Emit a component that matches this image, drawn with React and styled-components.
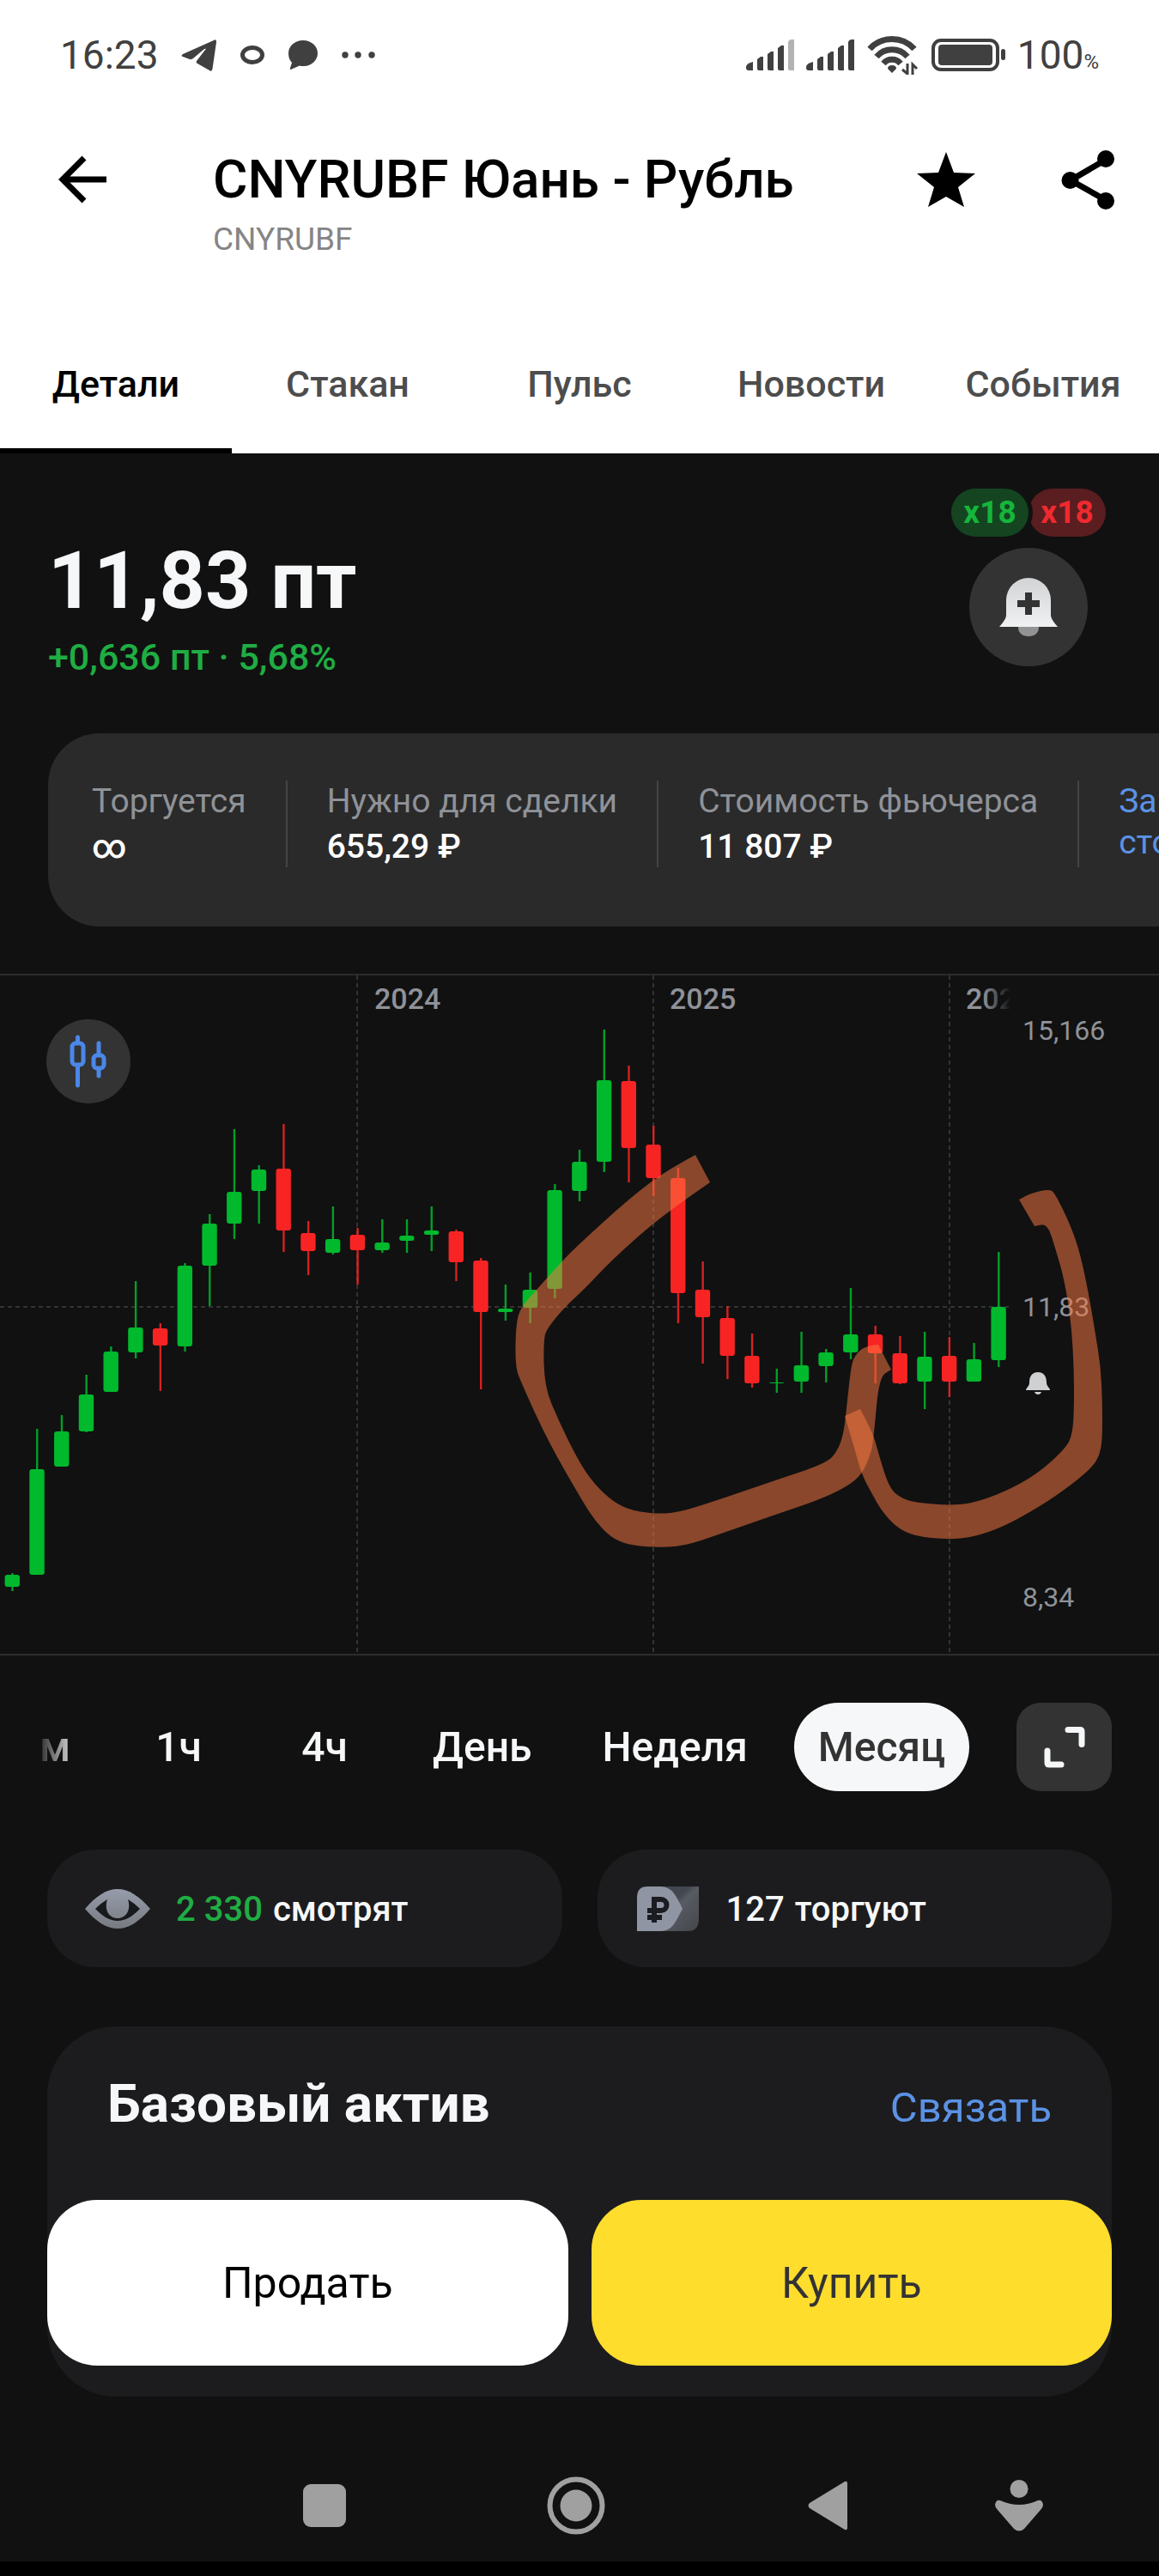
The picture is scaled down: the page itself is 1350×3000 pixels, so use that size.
import React from "react";
import styled, { createGlobalStyle } from "styled-components";

const colors = {
    white: "#ffffff",
    snow: "#f6f7f8",
    page: "#111111",
    card: "#1c1c1e",
    strip: "#2a2a2a",
    control: "#333333",
    grey: "#8f9298",
    status: "#404040",
    green: "#00b92d",
    textGreen: "#1fad43",
    red: "#f82424",
    blue: "#5b92e5",
    yellow: "#ffdd2d",
    nav: "#a0a0a0",
};

const GlobalStyle = createGlobalStyle`
    *, *::before, *::after {
        box-sizing: border-box;
    }

    body {
        margin: 0;
        background: ${colors.page};
        color: ${colors.snow};
        font-family: Roboto, "Liberation Sans", sans-serif;
    }

    h1, h2, p, dl, dt, dd, figure {
        margin: 0;
    }

    button {
        padding: 0;
        border: 0;
        background: none;
        color: inherit;
        font: inherit;
        cursor: pointer;
    }

    a {
        color: inherit;
        text-decoration: none;
    }

    svg {
        display: block;
        flex: none;
    }
`;

const Screen = styled.div`
    display: flex;
    flex-direction: column;
    min-height: 100vh;
    overflow: hidden;
`;

const Top = styled.header`
    background: ${colors.white};
    color: #000;
`;

const StatusBar = styled.div`
    display: flex;
    justify-content: space-between;
    align-items: center;
    height: 128px;
    padding: 0 70px;
    color: ${colors.status};
    font-size: 46px;
    line-height: 56px;
`;

const StatusGroup = styled.div`
    display: flex;
    align-items: center;
    gap: ${(props) => props.$gap}px;
`;

const Percent = styled.small`
    font-size: 24px;
    line-height: 24px;
`;

const TitleBar = styled.div`
    display: flex;
    align-items: flex-start;
    padding: 45px 51px 65px 68px;
`;

const IconButton = styled.button`
    display: flex;
    align-items: center;
    justify-content: center;
    height: 72px;
`;

const Titles = styled.div`
    flex: 1;
    margin-left: 124px;
`;

const Title = styled.h1`
    font-size: 62px;
    font-weight: 500;
    line-height: 72px;
`;

const Ticker = styled.p`
    margin-top: 12px;
    color: #858585;
    font-size: 37px;
    line-height: 44px;
`;

const TitleActions = styled.div`
    display: flex;
    gap: 100px;
`;

const Tabs = styled.nav`
    display: grid;
    grid-template-columns: repeat(5, 1fr);
`;

const Tab = styled.a`
    padding: 56px 0 50px;
    border-bottom: 6px solid ${(props) => (props.$active ? "#000" : "transparent")};
    color: ${(props) => (props.$active ? "#000" : "#4d4d4d")};
    font-size: 43px;
    font-weight: 500;
    line-height: 50px;
    text-align: center;
`;

const Quote = styled.section`
    display: flex;
    justify-content: space-between;
    padding: 41px 62px 0 56px;
`;

const QuoteText = styled.div`
    padding-top: 60px;
`;

const Price = styled.p`
    font-size: 93px;
    font-weight: 700;
    line-height: 96px;
`;

const Change = styled.p`
    margin-top: 16px;
    color: ${colors.textGreen};
    font-size: 43px;
    font-weight: 500;
    line-height: 48px;
`;

const QuoteSide = styled.div`
    display: flex;
    flex-direction: column;
    align-items: center;
    gap: 13px;
`;

const Badges = styled.div`
    display: flex;
`;

const Badge = styled.span`
    position: relative;
    z-index: ${(props) => (props.$up ? 1 : 0)};
    width: 90px;
    border-radius: 28px;
    background: ${(props) => (props.$up ? "#144520" : "#5a1d20")};
    box-shadow: ${(props) => (props.$up ? `0 0 0 5px ${colors.page}` : "none")};
    color: ${(props) => (props.$up ? "#16b53c" : "#ef2a2f")};
    font-size: 37px;
    font-weight: 700;
    line-height: 56px;
    text-align: center;
`;

const BellButton = styled.button`
    display: flex;
    align-items: center;
    justify-content: center;
    width: 138px;
    height: 138px;
    border-radius: 50%;
    background: ${colors.control};
`;

const Facts = styled.dl`
    display: flex;
    margin: 65px 0 55px 56px;
    padding: 55px 0 69px 51px;
    border-radius: 60px 0 0 60px;
    background: ${colors.strip};
    font-size: 39px;
    line-height: 48px;
    white-space: nowrap;
    overflow: hidden;
`;

const Fact = styled.div`
    flex: none;
    padding-right: 46px;
    margin-right: 46px;
    border-right: 2px solid #444;
`;

const FactLabel = styled.dt`
    color: ${colors.grey};
`;

const FactValue = styled.dd`
    margin-top: 5px;
    color: ${colors.white};
    font-weight: 500;
`;

const FactLink = styled.a`
    flex: none;
    color: ${colors.blue};
`;

const ChartPanel = styled.figure`
    position: relative;
    border-top: 2px solid #2c2c2c;
    border-bottom: 2px solid #2c2c2c;
`;

const ChartSvg = styled.svg`
    width: 100%;
    height: auto;
    font-family: Roboto, "Liberation Sans", sans-serif;
`;

const ChartType = styled.button`
    position: absolute;
    top: 51px;
    left: 54px;
    display: flex;
    align-items: center;
    justify-content: center;
    width: 98px;
    height: 98px;
    border-radius: 50%;
    background: ${colors.control};
`;

const Intervals = styled.div`
    display: flex;
    gap: 55px;
    padding: 55px 55px 0 40px;
`;

const IntervalList = styled.div`
    display: flex;
    flex: 1;
    justify-content: flex-end;
    gap: 26px;
    min-width: 0;
    overflow: hidden;
    mask-image: linear-gradient(to right, transparent, #000 50px);
`;

const Interval = styled.button`
    flex: none;
    min-width: ${(props) => (props.$cut ? 0 : 144)}px;
    height: 103px;
    padding: ${(props) => (props.$cut ? "0 28px 0 0" : "0 28px")};
    border-radius: 52px;
    background: ${(props) => (props.$active ? colors.snow : "transparent")};
    color: ${(props) => (props.$active ? "#333" : colors.snow)};
    font-size: 48px;
    font-weight: 500;
`;

const ExpandButton = styled.button`
    display: flex;
    flex: none;
    align-items: center;
    justify-content: center;
    width: 111px;
    height: 103px;
    border-radius: 28px;
    background: ${colors.control};
`;

const Stats = styled.div`
    display: grid;
    grid-template-columns: 1fr 1fr;
    gap: 41px;
    padding: 68px 55px 0;
`;

const Stat = styled.div`
    display: flex;
    align-items: center;
    gap: 30px;
    height: 137px;
    padding: 0 44px;
    border-radius: 56px;
    background: ${colors.card};
    font-size: 40px;
    font-weight: 500;
    line-height: 50px;
`;

const StatText = styled.p`
    display: flex;
    gap: 12px;
    padding-top: 2px;
    white-space: nowrap;
`;

const StatCount = styled.span`
    color: ${(props) => (props.$up ? colors.textGreen : "inherit")};
`;

const Asset = styled.section`
    margin: 69px 55px 0;
    padding-bottom: 36px;
    border-radius: 80px;
    background: ${colors.card};
`;

const AssetHead = styled.div`
    display: flex;
    align-items: baseline;
    justify-content: space-between;
    padding: 54px 70px 76px;
`;

const AssetTitle = styled.h2`
    font-size: 62px;
    font-weight: 700;
    line-height: 72px;
`;

const AssetLink = styled.a`
    color: ${colors.blue};
    font-size: 49px;
    line-height: 60px;
`;

const Deal = styled.div`
    display: grid;
    grid-template-columns: 1fr 1fr;
    gap: 27px;
`;

const DealButton = styled.button`
    height: 193px;
    border-radius: 58px;
    background: ${(props) => (props.$buy ? colors.yellow : colors.white)};
    color: ${(props) => (props.$buy ? "#333" : "#000")};
    font-size: 50px;
`;

const SystemNav = styled.nav`
    display: grid;
    grid-template-columns: 293fr 293fr 293fr 153fr;
    margin-top: auto;
    padding: 62px 86px 0 231px;
    border-bottom: 17px solid #000;
`;

const NavButton = styled.button`
    display: flex;
    align-items: center;
    justify-content: center;
    height: 130px;
`;

const tabs = ["Детали", "Стакан", "Пульс", "Новости", "События"];

const facts = [
    { label: "Торгуется", value: "∞" },
    { label: "Нужно для сделки", value: "655,29 ₽" },
    { label: "Стоимость фьючерса", value: "11 807 ₽" },
];

const intervals = ["м", "1ч", "4ч", "День", "Неделя", "Месяц"];

// direction, high, body top, body bottom, low
const candles = [
    ["up", 698, 700, 714, 719],
    ["up", 530, 577, 700, 700],
    ["up", 514, 533, 574, 574],
    ["up", 467, 490, 533, 534],
    ["up", 434, 440, 487, 487],
    ["up", 358, 412, 441, 448],
    ["down", 407, 413, 433, 486],
    ["up", 337, 340, 434, 440],
    ["up", 280, 291, 340, 387],
    ["up", 181, 254, 291, 309],
    ["up", 223, 228, 253, 291],
    ["down", 175, 227, 299, 324],
    ["down", 288, 302, 323, 351],
    ["up", 271, 309, 325, 327],
    ["down", 296, 304, 322, 362],
    ["up", 286, 313, 322, 325],
    ["up", 286, 305, 311, 325],
    ["up", 271, 299, 304, 323],
    ["down", 298, 300, 336, 358],
    ["down", 331, 334, 394, 484],
    ["up", 362, 390, 394, 404],
    ["up", 348, 368, 389, 407],
    ["up", 245, 252, 367, 378],
    ["up", 205, 219, 253, 265],
    ["up", 65, 124, 219, 231],
    ["down", 107, 125, 203, 243],
    ["down", 177, 199, 238, 259],
    ["down", 226, 238, 372, 407],
    ["down", 335, 368, 400, 454],
    ["down", 387, 401, 445, 472],
    ["down", 419, 445, 477, 482],
    ["up", 460, 476, 477, 488],
    ["up", 417, 456, 475, 488],
    ["up", 437, 441, 457, 476],
    ["up", 366, 420, 441, 449],
    ["down", 410, 420, 442, 477],
    ["down", 422, 442, 477, 478],
    ["up", 417, 446, 475, 507],
    ["down", 423, 445, 475, 493],
    ["up", 430, 449, 475, 475],
    ["up", 324, 388, 450, 458],
];

// each marker stroke is kept as its two edges
const markers = [
    [
        [
            [810, 211], [778, 228], [735, 260], [670, 319], [650, 340], [625, 368], [607, 388], [601, 407],
            [600, 457], [607, 476], [638, 544], [680, 617], [694, 638], [711, 656], [731, 665], [761, 668],
            [796, 667], [843, 651], [900, 631], [956, 612], [987, 597], [1004, 583], [1015, 558], [1018, 536],
            [1024, 470], [1038, 461],
        ],
        [
            [1023, 432], [1008, 433], [995, 445], [991, 460], [987, 497], [983, 534], [976, 555], [963, 570],
            [900, 591], [839, 612], [789, 628], [761, 629], [731, 624], [709, 611], [687, 588], [670, 560],
            [651, 521], [634, 481], [633, 425], [638, 412], [659, 387], [680, 368], [713, 333], [757, 294],
            [791, 268], [827, 243],
        ],
    ],
    [
        [
            [1187, 263], [1201, 255], [1223, 251], [1229, 256], [1247, 293], [1258, 325], [1268, 372], [1276, 420],
            [1282, 457], [1284, 499], [1284, 542], [1281, 560], [1273, 574], [1247, 596], [1212, 620], [1169, 644],
            [1134, 656], [1104, 659], [1065, 655], [1043, 644], [1026, 624], [1017, 608], [1004, 584], [995, 552],
            [984, 515],
        ],
        [
            [1002, 507], [1017, 535], [1023, 558], [1036, 600], [1052, 612], [1069, 616], [1104, 619], [1132, 617],
            [1169, 604], [1208, 583], [1242, 552], [1249, 536], [1251, 510], [1251, 462], [1248, 409], [1240, 357],
            [1229, 319], [1220, 291], [1205, 294],
        ],
    ],
];

function smoothEdge(points) {
    const last = points[points.length - 1];
    const curves = points.slice(1, -1).map(([x, y], i) => {
        const [nx, ny] = points[i + 2];
        return `Q${x} ${y} ${(x + nx) / 2} ${(y + ny) / 2}`;
    });
    return `${points[0].join(" ")}${curves.join("")}L${last.join(" ")}`;
}

const Signal = ({ weak }) => (
    <svg width="56" height="36" viewBox="0 0 56 36" fill="currentColor">
        <path d="M0 32q0-4 8-6v10H3q-3 0-3-3z" />
        <path d="M13 23l4-3h3v16h-5q-2 0-2-2z" />
        <path d="M25 17l4-3h3v22h-5q-2 0-2-2z" />
        <path d="M37 10l4-3h3v29h-5q-2 0-2-2z" />
        <path d="M49 3q1-3 4-3h3v36h-5q-2 0-2-2z" opacity={weak ? 0.4 : 1} />
    </svg>
);

const Chart = () => (
    <ChartSvg viewBox="0 0 1350 790" role="img" aria-label="CNYRUBF">
        <defs>
            <linearGradient id="yearFade" gradientUnits="userSpaceOnUse" x1="1145" y1="0" x2="1177" y2="0">
                <stop stopColor={colors.grey} />
                <stop offset="1" stopColor={colors.grey} stopOpacity="0" />
            </linearGradient>
        </defs>
        <g stroke="#333" strokeWidth="2" strokeDasharray="5 4">
            {[416, 761, 1106].map((x) => (
                <path key={x} d={`M${x} 0V788`} />
            ))}
            <path d="M0 386H1178" />
        </g>
        <g fill={colors.grey} fontSize="34" fontWeight="500">
            <text x="436" y="39">2024</text>
            <text x="780" y="39">2025</text>
            <text x="1125" y="39" fill="url(#yearFade)">2026</text>
        </g>
        <g fill={colors.grey} fontSize="32">
            <text x="1191" y="75">15,166</text>
            <text x="1191" y="397">11,83</text>
            <text x="1191" y="735">8,34</text>
        </g>
        {candles.map(([way, high, top, bottom, low], i) => {
            const x = 14.3 + i * 28.72;
            return (
                <g key={i} fill={way === "up" ? colors.green : colors.red}>
                    <rect x={x - 1} y={high - 2} width="2.4" height={low - high} opacity="0.85" />
                    <rect x={x - 8.7} y={top - 2} width="17.4" height={bottom - top} rx="3" />
                </g>
            );
        })}
        <path
            fill="#cfd0d2"
            d="M1195 483c0-3 4-4 4-9 0-8 4-12 10-12s10 4 10 12c0 5 4 6 4 9zM1205 485h8q-1 3-4 3t-4-3z"
        />
        {markers.map(([outer, inner], i) => (
            <path
                key={i}
                fill="rgba(250, 121, 67, 0.52)"
                d={`M${smoothEdge(outer)}L${smoothEdge(inner)}Z`}
                transform="translate(0 -2)"
            />
        ))}
    </ChartSvg>
);

export default function App() {
    return (
        <Screen>
            <GlobalStyle />
            <Top>
                <StatusBar>
                    <StatusGroup $gap={26}>
                        <span>16:23</span>
                        <svg width="42" height="37" viewBox="0 0 42 37" fill="currentColor">
                            <path d="M39 .4 2 17q-3 2 0 3l8 3q2 .5 4-1l13-11q3-1 1 1L18 25q-1 2 1 3l14 8q3 2 3.500-2L41 3q.2-3-2-2.600z" />
                        </svg>
                        <svg width="30" height="24" viewBox="0 0 30 24" fill="none" stroke="currentColor" strokeWidth="5">
                            <ellipse cx="15" cy="12" rx="11.500" ry="8.500" />
                        </svg>
                        <svg width="36" height="34" viewBox="0 0 36 34" fill="currentColor">
                            <path d="M18 0c10 0 17 7 17 15s-7 15-16 15q-3 0-5-.5L3.500 34q-1 0-.6-1.500L5 26C2 23 1 19 1 15 1 7 8 0 18 0z" />
                        </svg>
                        <svg width="40" height="8" viewBox="0 0 40 8" fill="currentColor">
                            <circle cx="5" cy="4" r="3.700" />
                            <circle cx="20" cy="4" r="3.700" />
                            <circle cx="36" cy="4" r="3.700" />
                        </svg>
                    </StatusGroup>
                    <StatusGroup $gap={14}>
                        <Signal weak />
                        <Signal />
                        <svg width="62" height="46" viewBox="0 0 62 46" fill="none" stroke="currentColor" strokeWidth="7">
                            <path d="M4 16a35 35 0 0 1 52 0" />
                            <path d="M12 25a24 24 0 0 1 36 0" />
                            <path d="M20 33a13 13 0 0 1 20 0" />
                            <path d="M30 44l-5-5q0-4 5-4t5 4z" fill="currentColor" stroke="none" />
                            <path d="M48 33v12l-6-5M54 46V34l5 5" strokeWidth="3" />
                        </svg>
                        <svg width="86" height="38" viewBox="2 0 86 38">
                            <rect x="4" y="2" width="75" height="34" rx="9" fill="none" stroke="currentColor" strokeWidth="4" />
                            <rect x="10" y="7" width="63" height="24" rx="4" fill="currentColor" />
                            <rect x="83" y="12" width="5" height="13" rx="2.500" fill="currentColor" />
                        </svg>
                        <span>
                            100<Percent>%</Percent>
                        </span>
                    </StatusGroup>
                </StatusBar>
                <TitleBar>
                    <IconButton aria-label="Назад">
                        <svg width="56" height="56" viewBox="0 0 56 56" fill="none" stroke="#000" strokeWidth="7">
                            <path d="M30 3 5 28l25 25M5 28h51" />
                        </svg>
                    </IconButton>
                    <Titles>
                        <Title>CNYRUBF Юань - Рубль</Title>
                        <Ticker>CNYRUBF</Ticker>
                    </Titles>
                    <TitleActions>
                        <IconButton aria-label="В избранное">
                            <svg width="68" height="64" viewBox="0 0 68 64">
                                <path d="M34 0l9 24 25 1-20 16 7 23-21-12-21 12 7-23L0 25l25-1z" />
                            </svg>
                        </IconButton>
                        <IconButton aria-label="Поделиться">
                            <svg width="63" height="69" viewBox="0 0 63 69">
                                <path d="M52 11 11 35l41 23" fill="none" stroke="#000" strokeWidth="7" />
                                <circle cx="52" cy="10" r="10" />
                                <circle cx="10.500" cy="35" r="10" />
                                <circle cx="52" cy="59" r="10" />
                            </svg>
                        </IconButton>
                    </TitleActions>
                </TitleBar>
                <Tabs>
                    {tabs.map((tab, index) => (
                        <Tab key={tab} href="#" $active={index === 0}>
                            {tab}
                        </Tab>
                    ))}
                </Tabs>
            </Top>

            <Quote>
                <QuoteText>
                    <Price>11,83 пт</Price>
                    <Change>+0,636 пт · 5,68%</Change>
                </QuoteText>
                <QuoteSide>
                    <Badges>
                        <Badge $up>x18</Badge>
                        <Badge>x18</Badge>
                    </Badges>
                    <BellButton aria-label="Уведомить о цене">
                        <svg width="68" height="68" viewBox="0 0 68 68">
                            <defs>
                                <linearGradient id="bell" x1="0" y1="0" x2="0" y2="1">
                                    <stop stopColor="#d2d3d4" />
                                    <stop offset="1" stopColor="#f0f1f2" />
                                </linearGradient>
                            </defs>
                            <path d="M22 56h24v2a10 10 0 0 1-10 10h-4a10 10 0 0 1-10-10z" fill="#929394" />
                            <path d="M8 26a26 26 0 0 1 52 0v18q0 4 8 13H0q8-9 8-13z" fill="url(#bell)" />
                            <path d="M30 17h8v9h9v8h-9v9h-8v-9h-9v-8h9z" fill={colors.control} />
                        </svg>
                    </BellButton>
                </QuoteSide>
            </Quote>

            <Facts>
                {facts.map((fact) => (
                    <Fact key={fact.label}>
                        <FactLabel>{fact.label}</FactLabel>
                        <FactValue>{fact.value}</FactValue>
                    </Fact>
                ))}
                <FactLink href="#">
                    За
                    <br />
                    сто
                </FactLink>
            </Facts>

            <ChartPanel>
                <Chart />
                <ChartType aria-label="Тип графика">
                    <svg width="46" height="64" viewBox="0 0 46 64" fill="none" stroke="#4a87e8" strokeWidth="5" strokeLinecap="round">
                        <rect x="4" y="11" width="13" height="25" rx="4" />
                        <path d="M10.500 4v6M10.500 38v22" />
                        <rect x="29" y="25" width="12" height="15" rx="4" />
                        <path d="M35 11v12M35 42v7" />
                    </svg>
                </ChartType>
            </ChartPanel>

            <Intervals>
                <IntervalList>
                    {intervals.map((name, index) => (
                        <Interval key={name} $cut={index === 0} $active={name === "Месяц"}>
                            {name}
                        </Interval>
                    ))}
                </IntervalList>
                <ExpandButton aria-label="На весь экран">
                    <svg width="50" height="50" viewBox="0 0 50 50" fill="none" stroke={colors.snow} strokeWidth="7" strokeLinecap="round" strokeLinejoin="round">
                        <path d="M29 4.500h14q2 0 2 2v15M5 29v14q0 2 2 2h14" />
                    </svg>
                </ExpandButton>
            </Intervals>

            <Stats>
                <Stat>
                    <svg width="76" height="46" viewBox="0 0 76 46">
                        <defs>
                            <linearGradient id="eye" x1="0" y1="0" x2="0" y2="1">
                                <stop stopColor="#969cab" />
                                <stop offset="1" stopColor="#777a80" />
                            </linearGradient>
                        </defs>
                        <path d="M0 23C13 8 25 0 38 0s25 8 38 23C63 38 51 46 38 46S13 38 0 23z" fill="url(#eye)" />
                        <path
                            d="M12 23q7-7 14-11c-4 12 2 22 12 22s16-10 12-22q7 4 14 11C55 32 47 37 38 37S21 32 12 23z"
                            fill="#18191d"
                        />
                    </svg>
                    <StatText>
                        <StatCount $up>2 330</StatCount>
                        <span>смотрят</span>
                    </StatText>
                </Stat>
                <Stat>
                    <svg width="76" height="52" viewBox="0 0 76 52">
                        <defs>
                            <linearGradient id="tagBack" x1="0" y1="0" x2="1" y2="1">
                                <stop offset="0.4" stopColor="#43474f" />
                                <stop offset="0.5" stopColor="#575b62" />
                                <stop offset="1" stopColor="#44464b" />
                            </linearGradient>
                        </defs>
                        <path d="M20 0h54v38q0 14-13 14H20z" fill="url(#tagBack)" />
                        <path d="M2 13Q2 0 14 0h15q10 0 16 8 5 7 10 18-5 10-10 18-6 8-16 8H2z" fill="#8f95a3" />
                        <path
                            d="M22 42V15h8a6 6 0 0 1 0 13H14M14 36h17"
                            fill="none"
                            stroke="#1a1c22"
                            strokeWidth="6"
                        />
                    </svg>
                    <StatText>
                        <StatCount>127</StatCount>
                        <span>торгуют</span>
                    </StatText>
                </Stat>
            </Stats>

            <Asset>
                <AssetHead>
                    <AssetTitle>Базовый актив</AssetTitle>
                    <AssetLink href="#">Связать</AssetLink>
                </AssetHead>
                <Deal>
                    <DealButton>Продать</DealButton>
                    <DealButton $buy>Купить</DealButton>
                </Deal>
            </Asset>

            <SystemNav>
                <NavButton aria-label="Недавние">
                    <svg width="50" height="50" viewBox="0 0 50 50" fill={colors.nav}>
                        <rect width="50" height="50" rx="9" />
                    </svg>
                </NavButton>
                <NavButton aria-label="Домой">
                    <svg width="68" height="68" viewBox="0 0 68 68" fill={colors.nav}>
                        <circle cx="34" cy="34" r="30.500" fill="none" stroke={colors.nav} strokeWidth="6" />
                        <circle cx="34" cy="34" r="18.500" />
                    </svg>
                </NavButton>
                <NavButton aria-label="Назад">
                    <svg width="46" height="58" viewBox="0 0 46 58" fill={colors.nav}>
                        <path d="M43 1q3-1 3 2v52q0 3-3 2L2 32q-3-3 0-6z" />
                    </svg>
                </NavButton>
                <NavButton aria-label="Спец. возможности">
                    <svg width="56" height="60" viewBox="0 0 56 60" fill={colors.nav}>
                        <circle cx="28" cy="10.500" r="10.500" />
                        <path d="M6 24q11 5 22 5t22-5q5-1 6 5 0 3-3 6L34 57q-6 5-12 0L3 35q-3-3-3-6 1-6 6-5z" />
                    </svg>
                </NavButton>
            </SystemNav>
        </Screen>
    );
}
